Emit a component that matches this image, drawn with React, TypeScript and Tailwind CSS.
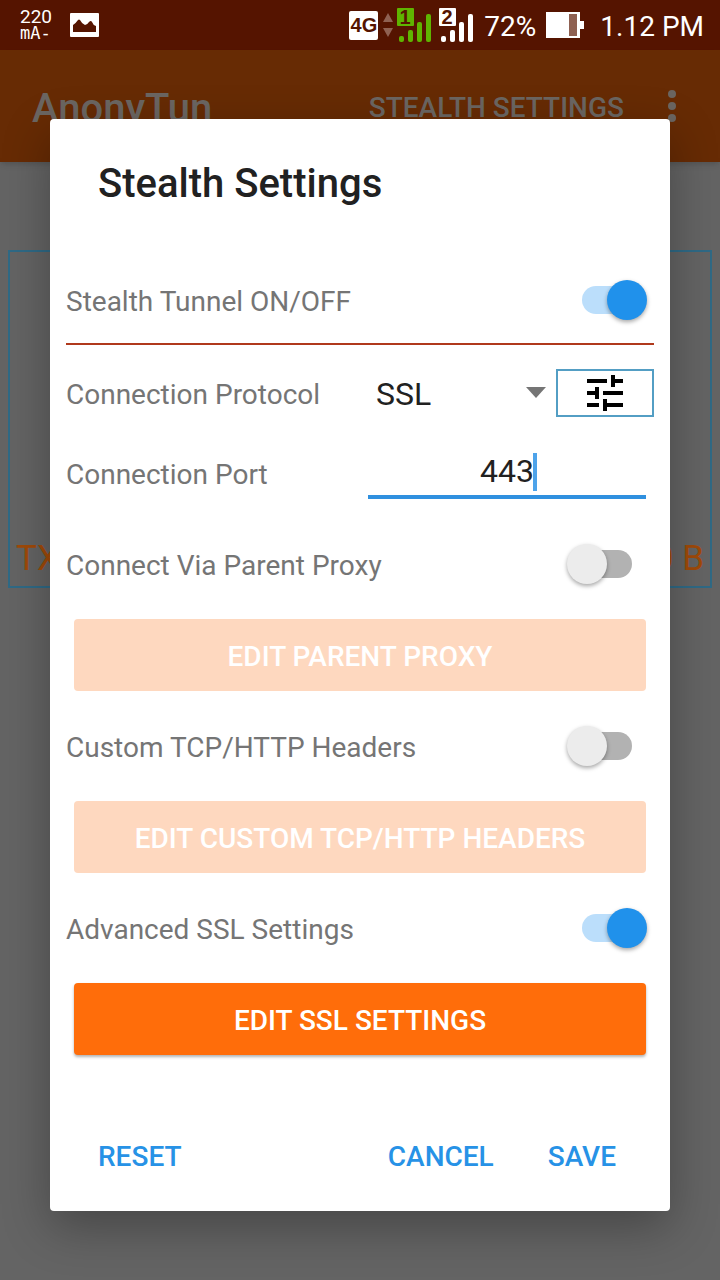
import React, { useState } from 'react';
import { clsx } from 'clsx';

interface SignalProps {
  sim: string;
  className: string;
}

function Signal({ sim, className }: SignalProps) {
  return (
    <svg viewBox="0 0 34 34" className={clsx('h-[34px] w-[34px] overflow-visible', className)} fill="currentColor">
      <rect x="0" y="0" width="17" height="18" rx="1" />
      <text
        x="8"
        y="16"
        textAnchor="middle"
        fill="#551400"
        fontSize="20"
        fontWeight="700"
        fontFamily="Liberation Sans, sans-serif"
      >
        {sim}
      </text>
      <rect x="2" y="28" width="5" height="6" rx="2" />
      <rect x="11" y="22" width="5" height="12" rx="2" />
      <rect x="20" y="14" width="5" height="20" rx="2" />
      <rect x="29" y="6" width="5" height="28" rx="2" />
    </svg>
  );
}

function StatusBar() {
  return (
    <div className="flex h-[50px] items-center bg-[#551400] pr-4 pl-5 text-[28px] leading-8 text-white">
      <div className="flex w-[34px] flex-col">
        <span className="text-[19px] leading-[17px]">220</span>
        <span className="font-['DejaVu_Sans_Mono',monospace] text-[17px] leading-[17px]">mA-</span>
      </div>
      <svg viewBox="0 0 29 24" className="ml-4 h-6 w-[29px]">
        <rect width="29" height="24" rx="1" fill="#fff" />
        <path d="M3 19V12Q6 10 8 7Q9 6 10 7Q12 11 15 12Q17 12 19 9Q21 7 22 9Q23 12 26 13V19Z" fill="#551400" />
      </svg>

      <div className="ml-auto flex items-center">
        <span className="flex h-[29px] w-[29px] items-center justify-center rounded-xs bg-white font-['Liberation_Sans',sans-serif] text-[20px] font-bold text-[#551400]">
          4G
        </span>
        <svg viewBox="0 0 10 24" className="ml-[5px] h-6 w-2.5" fill="#8f6152">
          <path d="M5 0L10 9H0ZM0 15H10L5 24Z" />
        </svg>
        <Signal sim="1" className="ml-1 text-[#5fb400]" />
        <Signal sim="2" className="ml-2 text-white" />
        <span className="ml-[11px] pt-1">72%</span>
        <svg viewBox="0 0 38 26" className="ml-2.5 h-[26px] w-[38px]">
          <path d="M0 0H34V9H38V17H34V26H0Z" fill="#fff" />
          <rect x="23" y="2" width="8" height="22" fill="#8f6152" />
        </svg>
        <span className="ml-4 pt-1">1.12 PM</span>
      </div>
    </div>
  );
}

function HomeScreen() {
  return (
    <div className="col-start-1 row-start-1 bg-[#646464]">
      <header className="flex h-28 items-center bg-[#672b04] pr-11 pl-8 font-medium text-[#6b6662] shadow-md">
        <h1 className="pt-1.5 text-[40px] leading-[50px]">AnonyTun</h1>
        <button className="ml-auto pt-1 text-[28px] leading-8">STEALTH SETTINGS</button>
        <button aria-label="More options" className="ml-11">
          <svg viewBox="0 0 8 32" className="h-8 w-2" fill="currentColor">
            <circle cx="4" cy="4" r="4" />
            <circle cx="4" cy="16" r="4" />
            <circle cx="4" cy="28" r="4" />
          </svg>
        </button>
      </header>
      <div className="mx-2 mt-[88px] flex h-[338px] items-end justify-between border-2 border-[#2f6a86] px-1.5 pb-1.5 text-[35px] leading-[42px] text-[#a04a08]">
        <span>TX</span>
        <span>0 B</span>
      </div>
    </div>
  );
}

interface SwitchRowProps {
  label: string;
  defaultChecked?: boolean;
  className?: string;
}

function SwitchRow({ label, defaultChecked, className }: SwitchRowProps) {
  return (
    <label className={clsx('flex items-center justify-between pr-[22px]', className)}>
      <span className="pt-1">{label}</span>
      <input
        type="checkbox"
        role="switch"
        defaultChecked={defaultChecked}
        className="relative h-7 w-[50px] appearance-none rounded-full bg-[#b2b2b2] before:absolute before:-top-1.5 before:-left-[15px] before:h-10 before:w-10 before:rounded-full before:bg-[#ececec] before:shadow-[0_2px_4px_rgba(0,0,0,0.35)] checked:bg-[#bbdefb] checked:before:left-[25px] checked:before:bg-[#2091eb]"
      />
    </label>
  );
}

interface EditButtonProps {
  children: React.ReactNode;
  disabled?: boolean;
}

function EditButton({ children, disabled }: EditButtonProps) {
  return (
    <button
      disabled={disabled}
      className="mx-2 mt-8 h-[72px] rounded-sm bg-[#ff6d0a] pt-1 font-medium text-white shadow-[0_2px_3px_rgba(0,0,0,0.3)] disabled:bg-[#fed8bf] disabled:shadow-none"
    >
      {children}
    </button>
  );
}

function StealthDialog() {
  const [port, setPort] = useState('443');

  return (
    <div
      role="dialog"
      aria-labelledby="dialog-title"
      className="z-10 col-start-1 row-start-1 mx-[50px] mt-[69px] mb-[69px] rounded-sm bg-white shadow-[0_16px_48px_rgba(0,0,0,0.3)]"
    >
      <h2 id="dialog-title" className="px-12 pt-10 pb-12 text-[40px] leading-[50px] font-medium text-[#212121]">
        Stealth Settings
      </h2>

      <div className="flex flex-col px-4 text-[28px] leading-8 text-[#757575]">
        <SwitchRow label="Stealth Tunnel ON/OFF" defaultChecked className="h-[88px] border-b-2 border-[#b0391c]" />

        <div className="mt-6 flex h-12 items-center">
          <label htmlFor="protocol" className="w-[302px] pt-1">
            Connection Protocol
          </label>
          <div className="relative mr-2 flex-1">
            <select
              id="protocol"
              className="h-12 w-full appearance-none bg-transparent px-2 pt-0.5 text-[32px] leading-10 text-[#212121]"
            >
              <option>SSL</option>
              <option>HTTP</option>
              <option>TCP</option>
            </select>
            <svg viewBox="0 0 20 11" className="pointer-events-none absolute top-[18px] right-0.5 h-[11px] w-5">
              <path d="M0 0H20L10 11Z" fill="#757575" />
            </svg>
          </div>
          <button
            aria-label="Protocol options"
            className="flex h-12 w-[98px] items-center justify-center border-2 border-[#539ec4]"
          >
            <svg viewBox="0 0 24 24" className="h-12 w-12 shrink-0">
              <path d="M3 17v2h6v-2H3zM3 5v2h10V5H3zm10 16v-2h8v-2h-8v-2h-2v6h2zM7 9v2H3v2h4v2h2V9H7zm14 4v-2H11v2h10zm-6-4h2V7h4V5h-4V3h-2v6z" />
            </svg>
          </button>
        </div>

        <div className="mt-8 mb-2.5 flex h-[50px] items-center">
          <label htmlFor="port" className="w-[302px] pt-0.5">
            Connection Port
          </label>
          <div className="relative mr-2 flex-1">
            <input
              id="port"
              type="text"
              value={port}
              onChange={(e) => setPort(e.target.value)}
              className="h-[50px] w-full border-b-4 border-[#2f90df] pb-0.5 text-center text-[32px] leading-10 text-[#212121] caret-transparent outline-none"
            />
            <span className="absolute top-1 left-1/2 ml-[26px] h-[38px] w-1 bg-[#4da3ea]" />
          </div>
        </div>

        <SwitchRow label="Connect Via Parent Proxy" className="mt-8 h-[46px]" />
        <EditButton disabled>EDIT PARENT PROXY</EditButton>

        <SwitchRow label="Custom TCP/HTTP Headers" className="mt-8 h-[46px]" />
        <EditButton disabled>EDIT CUSTOM TCP/HTTP HEADERS</EditButton>

        <SwitchRow label="Advanced SSL Settings" defaultChecked className="mt-8 h-[46px]" />
        <EditButton>EDIT SSL SETTINGS</EditButton>
      </div>

      <div className="mt-16 flex gap-[22px] pr-[38px] pb-[18px] pl-8 text-[28px] leading-8 font-medium text-[#2792e6]">
        <button className="h-[74px] px-4 pt-0.5">RESET</button>
        <button className="ml-auto h-[74px] px-4 pt-0.5">CANCEL</button>
        <button className="h-[74px] px-4 pt-0.5">SAVE</button>
      </div>
    </div>
  );
}

export default function App() {
  return (
    <div className="flex min-h-screen flex-col font-['Roboto',sans-serif]">
      <StatusBar />
      <main className="grid flex-1">
        <HomeScreen />
        <StealthDialog />
      </main>
    </div>
  );
}
